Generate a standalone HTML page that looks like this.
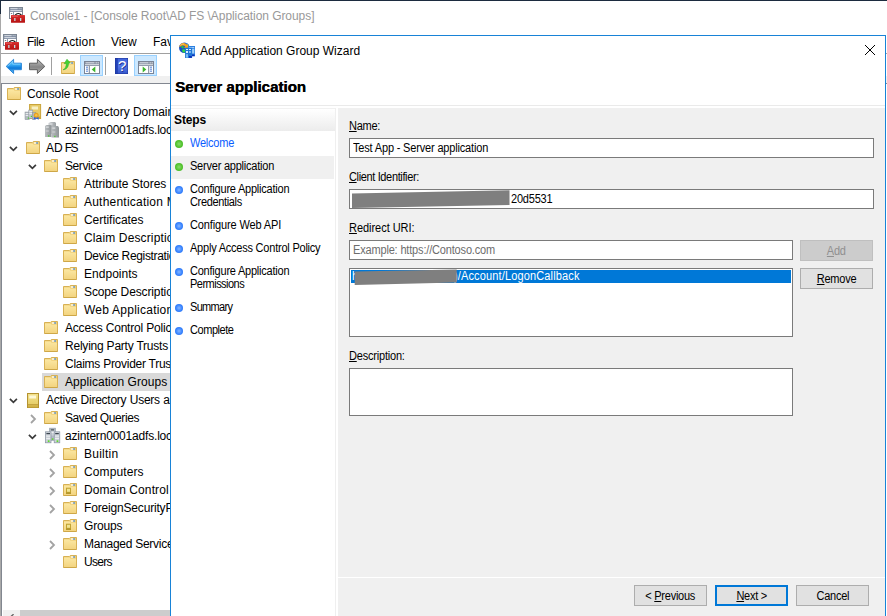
<!DOCTYPE html>
<html lang="en">
<head>
<meta charset="utf-8">
<title>Console1 - [Console Root\AD FS \Application Groups]</title>
<style>
*{box-sizing:border-box;margin:0;padding:0}
html,body{width:887px;height:616px;overflow:hidden;background:#fff}
body{position:relative;font-family:"Liberation Sans",sans-serif;font-size:12px;color:#000}
.abs{position:absolute}
#frameTop{left:0;top:0;width:887px;height:1px;background:#1c2b3f}
#frameLeft{left:0;top:1px;width:1px;height:615px;background:#a9a9a9}
#frameLeftDark{left:0;top:0;width:1px;height:14px;background:#1c2b3f}
#title{left:30px;top:8px;color:#999;font-size:12px;letter-spacing:-0.06px;white-space:nowrap;line-height:16px}
.menu{top:34px;font-size:12px;white-space:nowrap;line-height:16px}
#menuSep{left:1px;top:53px;width:886px;height:1px;background:#a0a0a0}
#band{left:1px;top:76px;width:886px;height:7px;background:#f0f0f0}
#treeBorderT{left:1px;top:83px;width:886px;height:1px;background:#828790}
#treeBorderL{left:1px;top:83px;width:1px;height:533px;background:#828790}
#tree{left:2px;top:84px;width:168px;height:526px;overflow:hidden;background:#fff}
#treeIn{position:absolute;left:-2px;top:-84px;width:400px;height:700px}
.tt{position:absolute;font-size:12px;line-height:18px;white-space:nowrap;color:#000}
.ic,.ch{position:absolute;display:block;overflow:visible}
.sel{position:absolute;width:140px;height:18px;background:#d9d9d9}
.tsep{top:57px;width:1px;height:18px;background:#a0a0a0}
.tbtn{top:55px;width:23px;height:21px;background:#cce8ff;border:1px solid #99d1ff}
#hsb{left:3px;top:610px;width:167px;height:6px;background:#f0f0f0}
#hsbThumb{left:20px;top:610px;width:150px;height:6px;background:#cdcdcd}
/* dialog */
#dlg{left:170px;top:35px;width:716px;height:600px;background:#fff;border:1px solid #1883d7}
#dtitle{left:200px;top:43px;font-size:12px;line-height:16px;white-space:nowrap}
#dhead{left:175px;top:78px;font-size:14px;font-weight:bold;line-height:18px;white-space:nowrap;transform-origin:0 0;transform:scaleX(1.079);text-shadow:0.35px 0 0 #000}
#dsep{left:171px;top:105px;width:714px;height:1px;background:#eaeaea}
#stepsHdr{left:171px;top:108px;width:164px;height:23px;background:linear-gradient(#ffffff,#ececec);border-top:1px solid #f1f1f1}
#stepsT{left:174px;top:113px;font-size:12px;font-weight:bold;letter-spacing:-0.1px;line-height:15px}
#stepSel{left:171px;top:156px;width:163px;height:23px;background:#f0f0f0}
.st{position:absolute;left:190px;font-size:12px;line-height:13px;white-space:nowrap;letter-spacing:-0.24px;transform:scaleX(.9167);transform-origin:0 0}
.dot{position:absolute;left:175px;width:8px;height:8px;border-radius:50%}
.dot.g{background:radial-gradient(circle at 50% 50%,#8adb6e 0%,#58c634 50%,#33ad10 100%)}
.dot.b{background:radial-gradient(circle at 50% 50%,#86b6ff 0%,#3f88ff 50%,#1263ee 100%)}
#pane{left:338px;top:108px;width:547px;height:508px;background:#f0f0f0}
.lb{position:absolute;left:349px;font-size:12px;line-height:13px;white-space:nowrap;transform:scaleX(.9167);transform-origin:0 0}
.sx{display:inline-block;font-size:12px;transform:scaleX(.9167);transform-origin:0 50%}
.sc{display:inline-block;font-size:12px;letter-spacing:-0.27px;transform:scaleX(.9167);transform-origin:50% 50%}
.lb u,.btn u{text-decoration:underline}
.inp{position:absolute;background:#fff;border:1px solid #7a7a7a;font-size:11px;line-height:18px;padding-left:3px;white-space:nowrap;overflow:hidden}
.btn{position:absolute;height:21px;width:73px;background:#e1e1e1;border:1px solid #adadad;font-size:11px;line-height:19px;padding-top:1px;text-align:center;letter-spacing:-0.25px}
.btn.dis{background:#cccccc;border-color:#bfbfbf;color:#909090}
.btn.def{border:2px solid #0078d7;line-height:17px}
.red{position:absolute;background:#7f7f7f}
#psep{left:338px;top:577px;width:547px;height:1px;background:#fff}
</style>
</head>
<body>
<svg width="0" height="0" style="position:absolute">
<defs>
<linearGradient id="gF" x1="0" y1="0" x2="0" y2="1"><stop offset="0" stop-color="#fbe7a2"/><stop offset="1" stop-color="#f3d480"/></linearGradient>
<symbol id="i-folder" viewBox="0 0 16 16">
<path d="M0.5 3.5 H6.3 L7.3 2.5 H13.5 V14.5 H0.5Z" fill="#efcf78" stroke="#d8b154" stroke-width="1"/>
<path d="M1 4.6 H6.4 L7.6 5.8 H13 V14 H1Z" fill="url(#gF)"/>
<rect x="8" y="3.4" width="2.2" height="1.2" fill="#fff"/><rect x="10.2" y="3.4" width="1.8" height="1.2" fill="#3f8ae8"/>
<rect x="0.5" y="14" width="13" height="0.6" fill="#c9a040"/>
</symbol>
<symbol id="i-ou" viewBox="0 0 16 16">
<use href="#i-folder"/>
<rect x="3" y="6.700" width="5" height="6" fill="#c2a433"/>
<rect x="4" y="7.800" width="3" height="3" fill="#f0e391"/>
<rect x="3" y="11.700" width="5" height="1" fill="#a88a22"/>
</symbol>
<symbol id="i-srv" viewBox="0 0 16 16" overflow="visible">
<linearGradient id="gS" x1="0" y1="0" x2="1" y2="0"><stop offset="0" stop-color="#b9bdc0"/><stop offset="0.500" stop-color="#a3a8ab"/><stop offset="1" stop-color="#8f9497"/></linearGradient>
<linearGradient id="gS2" x1="0" y1="0" x2="1" y2="0"><stop offset="0" stop-color="#c9cccf"/><stop offset="1" stop-color="#9da2a5"/></linearGradient>
<path d="M3.500 2 L6 1 H10 L11 2 V13 H3.500Z" fill="url(#gS2)"/>
<rect x="4.500" y="2.500" width="3" height="1" fill="#e6e8ea"/>
<path d="M0 5 L1.500 4 H5.500 L6.500 5 V16 H0Z" fill="url(#gS)"/>
<rect x="0.800" y="5.600" width="3" height="1" fill="#e6e8ea"/><rect x="0.800" y="9.500" width="3" height="1" fill="#d3d6d8"/>
<path d="M6.500 6 L8 5 H13 L14 6.500 V16.500 H6.500Z" fill="url(#gS)"/>
<rect x="7.300" y="6.600" width="3" height="1" fill="#e6e8ea"/><rect x="7.300" y="10.500" width="3" height="1" fill="#d3d6d8"/>
<rect x="3" y="14.300" width="1.300" height="1.300" fill="#4ad02c"/><rect x="9.200" y="14.800" width="1.300" height="1.300" fill="#4ad02c"/>
</symbol>
<symbol id="i-dom" viewBox="0 0 16 16" overflow="visible">
<rect x="4.700" y="1.200" width="5.600" height="8" fill="#ccd2d8" stroke="#8893a0" stroke-width="0.700"/>
<rect x="5.700" y="2.300" width="3.600" height="1.200" fill="#3d4650"/>
<rect x="5.500" y="5" width="4" height="0.800" fill="#f4f6f8"/>
<rect x="6" y="9" width="3" height="5" fill="#b4bcc4"/>
<rect x="6.800" y="11.300" width="1.600" height="1.600" fill="#5fdc2a"/>
<rect x="0.400" y="4.800" width="5.600" height="11" fill="#ccd2d8" stroke="#8893a0" stroke-width="0.700"/>
<rect x="1.400" y="6" width="3.600" height="1.200" fill="#3d4650"/>
<rect x="1.200" y="8.700" width="4" height="0.800" fill="#f4f6f8"/><rect x="1.200" y="11" width="4" height="0.800" fill="#f4f6f8"/>
<rect x="2.800" y="13.300" width="1.700" height="1.700" fill="#5fdc2a"/>
<rect x="9.200" y="4.800" width="5.600" height="11" fill="#ccd2d8" stroke="#8893a0" stroke-width="0.700"/>
<rect x="10.200" y="6" width="3.600" height="1.200" fill="#3d4650"/>
<rect x="10" y="8.700" width="4" height="0.800" fill="#f4f6f8"/><rect x="10" y="11" width="4" height="0.800" fill="#f4f6f8"/>
<rect x="11.600" y="13.300" width="1.700" height="1.700" fill="#5fdc2a"/>
</symbol>
<symbol id="i-aduc" viewBox="0 0 16 16" overflow="visible">
<linearGradient id="gA" x1="0" y1="0" x2="0" y2="1"><stop offset="0" stop-color="#f3e28f"/><stop offset="1" stop-color="#e3c95e"/></linearGradient>
<rect x="1.500" y="2.500" width="11" height="14" fill="url(#gA)" stroke="#b59330" stroke-width="1"/>
<rect x="3.300" y="4.500" width="6.700" height="3" fill="#fdf8d6"/>
<rect x="1.500" y="13.300" width="11" height="1" fill="#b59330"/>
<rect x="2" y="14.300" width="10" height="2" fill="#d2b245"/>
</symbol>
<symbol id="i-addt" viewBox="0 0 16 16" overflow="visible">
<rect x="3.600" y="1.500" width="11" height="14" fill="#e6ca68" stroke="#c9a43a" stroke-width="1"/>
<rect x="5.700" y="3.500" width="6.300" height="3" fill="#f7efc4"/>
<rect x="3.600" y="13.500" width="11" height="1.500" fill="#c9a43a"/>
<rect x="-1" y="9" width="4.500" height="7.700" fill="#b3bac0" stroke="#8a929a" stroke-width="0.500"/>
<rect x="-0.300" y="10" width="3" height="0.900" fill="#eef0f2"/><rect x="-0.300" y="12" width="3" height="0.900" fill="#eef0f2"/>
<rect x="2.800" y="7" width="4" height="8.500" fill="#c3c9ce" stroke="#8a929a" stroke-width="0.500"/>
<rect x="3.400" y="8" width="2.800" height="0.900" fill="#eef0f2"/><rect x="3.400" y="10" width="2.800" height="0.900" fill="#eef0f2"/>
<rect x="6.300" y="9.500" width="3.500" height="7" fill="#b3bac0" stroke="#8a929a" stroke-width="0.500"/>
<rect x="1.800" y="14.500" width="1.200" height="1.200" fill="#4ad02c"/><rect x="4.800" y="12.800" width="1.200" height="1.200" fill="#4ad02c"/>
<path d="M8 14 L7.600 16.800 L10.200 15.500 L12.800 16.800 L12.400 14Z" fill="#2a62e0"/>
<circle cx="10.200" cy="12.300" r="2.500" fill="#e9a21e"/>
<circle cx="10.200" cy="12.300" r="1.200" fill="#f3c14d"/>
</symbol>
<symbol id="i-mmc" viewBox="0 0 17 17">
<linearGradient id="gT" x1="0" y1="0" x2="0" y2="1"><stop offset="0" stop-color="#d93434"/><stop offset="0.250" stop-color="#cf2626"/><stop offset="1" stop-color="#b51212"/></linearGradient>
<rect x="0.500" y="0.500" width="13" height="11" fill="#fff" stroke="#7d8794" stroke-width="1"/>
<rect x="1" y="1" width="12" height="4" fill="#77859b"/>
<rect x="1.300" y="1.300" width="7.400" height="0.900" fill="#f4f6f9"/>
<rect x="9.600" y="1.300" width="1" height="0.900" fill="#f4f6f9"/><rect x="11.500" y="1.300" width="1" height="0.900" fill="#f4f6f9"/>
<rect x="1.300" y="3.300" width="11.400" height="0.900" fill="#f4f6f9"/>
<rect x="4.200" y="5" width="0.800" height="6" fill="#77859b"/>
<rect x="1.800" y="6.100" width="1.400" height="0.800" fill="#556070"/>
<path d="M5.700 8.600 Q9.300 4.400 12.900 8.600" stroke="#151515" stroke-width="1.200" fill="none"/>
<rect x="2" y="8" width="14" height="7.800" rx="0.500" fill="url(#gT)"/>
<rect x="3" y="8.800" width="6" height="0.700" fill="#ec8080" opacity="0.800"/>
<rect x="5.200" y="11" width="1.300" height="3" fill="#c4d9df"/><rect x="11" y="11" width="1.300" height="3" fill="#c4d9df"/>
</symbol>
</defs>
</svg>

<div id="frameTop" class="abs"></div>
<div id="frameLeft" class="abs"></div>
<div id="frameLeftDark" class="abs"></div>

<svg class="abs" style="left:9px;top:7px" width="17" height="17"><use href="#i-mmc"/></svg>
<div id="title" class="abs">Console1 - [Console Root\AD FS \Application Groups]</div>

<svg class="abs" style="left:3px;top:34px" width="17" height="17"><use href="#i-mmc"/></svg>
<div class="abs menu" style="left:27px;letter-spacing:-0.46px">File</div>
<div class="abs menu" style="left:61px;letter-spacing:0.14px">Action</div>
<div class="abs menu" style="left:111px;letter-spacing:-0.07px">View</div>
<div class="abs menu" style="left:153px">Favorites</div>
<div id="menuSep" class="abs"></div>

<!-- toolbar -->
<svg class="abs" style="left:5px;top:58px" width="18" height="17" viewBox="0 0 18 17">
<defs><linearGradient id="gB" x1="0" y1="0" x2="0" y2="1"><stop offset="0" stop-color="#74d2ff"/><stop offset="0.400" stop-color="#35a8f4"/><stop offset="0.620" stop-color="#0c78d8"/><stop offset="1" stop-color="#6cc6fa"/></linearGradient></defs>
<path d="M1.200 8.400 L8.600 1.300 V5.200 H16.400 V11.700 H8.600 V15.500Z" fill="url(#gB)" stroke="#2a86d8" stroke-width="1" stroke-linejoin="round"/><path d="M2.700 8.400 L7.700 3.600 V6.200 H15.400" fill="none" stroke="#8ad6ff" stroke-width="0.800" opacity="0.900"/></svg>
<svg class="abs" style="left:28px;top:58px" width="18" height="17" viewBox="0 0 18 17">
<defs><linearGradient id="gG" x1="0" y1="0" x2="0" y2="1"><stop offset="0" stop-color="#c2c2c2"/><stop offset="0.550" stop-color="#868686"/><stop offset="1" stop-color="#b6b6b6"/></linearGradient></defs>
<path d="M16.800 8.400 L9.400 1.300 V5.200 H1.500 V11.700 H9.400 V15.500Z" fill="url(#gG)" stroke="#5e5e5e" stroke-width="1" stroke-linejoin="round"/></svg>
<div class="abs tsep" style="left:51px"></div>
<svg class="abs" style="left:61px;top:58px" width="16" height="17" viewBox="0 0 16 17">
<g transform="translate(0,1)"><use href="#i-folder" width="16" height="16"/></g>
<path d="M2 11.800 C4.200 10.800 5.300 8.500 5.200 5.400 L3.100 5.700 L6 1.200 L9.400 5 L7.500 5.200 C7.700 9 5.500 11.500 2 11.800Z" fill="#45d133" stroke="#2fae22" stroke-width="0.500"/>
</svg>
<div class="abs tbtn" style="left:80px"></div>
<svg class="abs" style="left:84px;top:61px" width="16" height="13" viewBox="0 0 16 13">
<rect x="0.500" y="0.500" width="15" height="12" fill="#fff" stroke="#7b8496"/>
<rect x="1" y="1" width="14" height="4" fill="#7e899c"/>
<rect x="1.500" y="1.400" width="9" height="0.900" fill="#f2f4f7"/>
<rect x="11.600" y="1.300" width="1.100" height="1.100" fill="#fff"/><rect x="13.600" y="1.300" width="1.100" height="1.100" fill="#fff"/>
<rect x="1" y="3.300" width="14" height="0.900" fill="#f2f4f7"/>
<rect x="4.800" y="5" width="1" height="7.500" fill="#7b8496"/>
<rect x="2" y="5.700" width="2" height="0.900" fill="#3b6fd0"/><rect x="2" y="7.700" width="2" height="0.900" fill="#3b6fd0"/><rect x="2" y="9.700" width="2" height="0.900" fill="#3b6fd0"/>
<path d="M11.300 5.500 V11.500 L7.700 8.500Z" fill="#3cb52c"/>
</svg>
<div class="abs tsep" style="left:105px"></div>
<svg class="abs" style="left:115px;top:58px" width="13" height="16" viewBox="0 0 13 16">
<defs><linearGradient id="gH" x1="0" y1="0" x2="0" y2="1"><stop offset="0" stop-color="#3f63da"/><stop offset="0.500" stop-color="#5578e6"/><stop offset="1" stop-color="#3557cc"/></linearGradient></defs>
<rect x="0" y="0" width="13" height="16" fill="#1d3296"/>
<rect x="0.500" y="0.500" width="2.300" height="15" fill="#2343b8"/>
<rect x="2.800" y="0.500" width="9.700" height="15" fill="url(#gH)"/>
<text x="7.800" y="13.600" font-family="Liberation Sans, sans-serif" font-size="15" fill="#1d3296" text-anchor="middle">?</text>
<text x="7.200" y="13" font-family="Liberation Sans, sans-serif" font-size="15" fill="#fff" text-anchor="middle">?</text>
</svg>
<div class="abs tbtn" style="left:134px"></div>
<svg class="abs" style="left:138px;top:61px" width="16" height="13" viewBox="0 0 16 13">
<rect x="0.500" y="0.500" width="15" height="12" fill="#fff" stroke="#7b8496"/>
<rect x="1" y="1" width="14" height="4" fill="#7e899c"/>
<rect x="1.500" y="1.400" width="9" height="0.900" fill="#f2f4f7"/>
<rect x="11.600" y="1.300" width="1.100" height="1.100" fill="#fff"/><rect x="13.600" y="1.300" width="1.100" height="1.100" fill="#fff"/>
<rect x="1" y="3.300" width="14" height="0.900" fill="#f2f4f7"/>
<rect x="10.200" y="5" width="1" height="7.500" fill="#7b8496"/>
<rect x="12" y="5.700" width="2" height="0.900" fill="#3b6fd0"/><rect x="12" y="7.700" width="2" height="0.900" fill="#3b6fd0"/><rect x="12" y="9.700" width="2" height="0.900" fill="#3b6fd0"/>
<path d="M4.700 5.500 V11.500 L8.300 8.500Z" fill="#3cb52c"/>
</svg>

<div id="band" class="abs"></div>
<div id="treeBorderT" class="abs"></div>
<div id="treeBorderL" class="abs"></div>
<div id="tree" class="abs"><div id="treeIn">
<svg class="ic" style="left:7px;top:85px" width="16" height="16"><use href="#i-folder"/></svg>
<span class="tt" style="left:27px;top:85px;letter-spacing:-0.111px;word-spacing:0px">Console Root</span>
<svg class="ch" style="left:9px;top:110px" width="10" height="8" viewBox="0 0 10 8"><path d="M0.9 0.9 L4.4 4.4 L7.9 0.9" fill="none" stroke="#3a3a3a" stroke-width="1.7"/></svg>
<svg class="ic" style="left:26px;top:103px" width="16" height="16"><use href="#i-addt"/></svg>
<span class="tt" style="left:46px;top:103px;letter-spacing:-0.026px;word-spacing:0px">Active Directory Domains and Trusts</span>
<svg class="ic" style="left:45px;top:121px" width="16" height="16"><use href="#i-srv"/></svg>
<span class="tt" style="left:65px;top:121px;letter-spacing:-0.192px;word-spacing:0px">azintern0001adfs.local</span>
<svg class="ch" style="left:9px;top:146px" width="10" height="8" viewBox="0 0 10 8"><path d="M0.9 0.9 L4.4 4.4 L7.9 0.9" fill="none" stroke="#3a3a3a" stroke-width="1.7"/></svg>
<svg class="ic" style="left:26px;top:139px" width="16" height="16"><use href="#i-folder"/></svg>
<span class="tt" style="left:46px;top:139px;letter-spacing:-0.114px;word-spacing:-0.9px">AD <span style="letter-spacing:-1.6px">FS</span></span>
<svg class="ch" style="left:28px;top:164px" width="10" height="8" viewBox="0 0 10 8"><path d="M0.9 0.9 L4.4 4.4 L7.9 0.9" fill="none" stroke="#3a3a3a" stroke-width="1.7"/></svg>
<svg class="ic" style="left:44px;top:157px" width="16" height="16"><use href="#i-folder"/></svg>
<span class="tt" style="left:65px;top:157px;letter-spacing:-0.404px;word-spacing:0px">Service</span>
<svg class="ic" style="left:63px;top:175px" width="16" height="16"><use href="#i-folder"/></svg>
<span class="tt" style="left:84px;top:175px;letter-spacing:-0.027px;word-spacing:0px">Attribute Stores</span>
<svg class="ic" style="left:63px;top:193px" width="16" height="16"><use href="#i-folder"/></svg>
<span class="tt" style="left:84px;top:193px;letter-spacing:0.219px;word-spacing:0px">Authentication Methods</span>
<svg class="ic" style="left:63px;top:211px" width="16" height="16"><use href="#i-folder"/></svg>
<span class="tt" style="left:84px;top:211px;letter-spacing:-0.048px;word-spacing:0px">Certificates</span>
<svg class="ic" style="left:63px;top:229px" width="16" height="16"><use href="#i-folder"/></svg>
<span class="tt" style="left:84px;top:229px;letter-spacing:0.137px;word-spacing:0px">Claim Descriptions</span>
<svg class="ic" style="left:63px;top:247px" width="16" height="16"><use href="#i-folder"/></svg>
<span class="tt" style="left:84px;top:247px;letter-spacing:-0.344px;word-spacing:0px">Device Registration</span>
<svg class="ic" style="left:63px;top:265px" width="16" height="16"><use href="#i-folder"/></svg>
<span class="tt" style="left:84px;top:265px;letter-spacing:0.028px;word-spacing:0px">Endpoints</span>
<svg class="ic" style="left:63px;top:283px" width="16" height="16"><use href="#i-folder"/></svg>
<span class="tt" style="left:84px;top:283px;letter-spacing:-0.125px;word-spacing:0px">Scope Descriptions</span>
<svg class="ic" style="left:63px;top:301px" width="16" height="16"><use href="#i-folder"/></svg>
<span class="tt" style="left:84px;top:301px;letter-spacing:0.241px;word-spacing:0px">Web Application Proxy</span>
<svg class="ic" style="left:44px;top:319px" width="16" height="16"><use href="#i-folder"/></svg>
<span class="tt" style="left:65px;top:319px;letter-spacing:-0.191px;word-spacing:0px">Access Control Policies</span>
<svg class="ic" style="left:44px;top:337px" width="16" height="16"><use href="#i-folder"/></svg>
<span class="tt" style="left:65px;top:337px;letter-spacing:-0.22px;word-spacing:0px">Relying Party Trusts</span>
<svg class="ic" style="left:44px;top:355px" width="16" height="16"><use href="#i-folder"/></svg>
<span class="tt" style="left:65px;top:355px;letter-spacing:-0.265px;word-spacing:0px">Claims Provider Trusts</span>
<div class="sel" style="left:42px;top:373px"></div>
<svg class="ic" style="left:44px;top:373px" width="16" height="16"><use href="#i-folder"/></svg>
<span class="tt" style="left:65px;top:373px;letter-spacing:0.048px;word-spacing:0px">Application Groups</span>
<svg class="ch" style="left:9px;top:398px" width="10" height="8" viewBox="0 0 10 8"><path d="M0.9 0.9 L4.4 4.4 L7.9 0.9" fill="none" stroke="#3a3a3a" stroke-width="1.7"/></svg>
<svg class="ic" style="left:26px;top:391px" width="16" height="16"><use href="#i-aduc"/></svg>
<span class="tt" style="left:46px;top:391px;letter-spacing:-0.257px;word-spacing:0.4px">Active Directory Users and Computers</span>
<svg class="ch" style="left:30px;top:414px" width="8" height="11" viewBox="0 0 8 11"><path d="M1.0 1.0 L5.0 5.0 L1.0 9.0" fill="none" stroke="#a3a3a3" stroke-width="1.8"/></svg>
<svg class="ic" style="left:44px;top:409px" width="16" height="16"><use href="#i-folder"/></svg>
<span class="tt" style="left:65px;top:409px;letter-spacing:-0.416px;word-spacing:0px">Saved Queries</span>
<svg class="ch" style="left:28px;top:434px" width="10" height="8" viewBox="0 0 10 8"><path d="M0.9 0.9 L4.4 4.4 L7.9 0.9" fill="none" stroke="#3a3a3a" stroke-width="1.7"/></svg>
<svg class="ic" style="left:45px;top:427px" width="16" height="16"><use href="#i-dom"/></svg>
<span class="tt" style="left:65px;top:427px;letter-spacing:-0.192px;word-spacing:0px">azintern0001adfs.local</span>
<svg class="ch" style="left:49px;top:450px" width="8" height="11" viewBox="0 0 8 11"><path d="M1.0 1.0 L5.0 5.0 L1.0 9.0" fill="none" stroke="#a3a3a3" stroke-width="1.8"/></svg>
<svg class="ic" style="left:63px;top:445px" width="16" height="16"><use href="#i-folder"/></svg>
<span class="tt" style="left:84px;top:445px;letter-spacing:0.252px;word-spacing:0px">Builtin</span>
<svg class="ch" style="left:49px;top:468px" width="8" height="11" viewBox="0 0 8 11"><path d="M1.0 1.0 L5.0 5.0 L1.0 9.0" fill="none" stroke="#a3a3a3" stroke-width="1.8"/></svg>
<svg class="ic" style="left:63px;top:463px" width="16" height="16"><use href="#i-folder"/></svg>
<span class="tt" style="left:84px;top:463px;letter-spacing:0.114px;word-spacing:0px">Computers</span>
<svg class="ch" style="left:49px;top:486px" width="8" height="11" viewBox="0 0 8 11"><path d="M1.0 1.0 L5.0 5.0 L1.0 9.0" fill="none" stroke="#a3a3a3" stroke-width="1.8"/></svg>
<svg class="ic" style="left:63px;top:481px" width="16" height="16"><use href="#i-ou"/></svg>
<span class="tt" style="left:84px;top:481px;letter-spacing:0.094px;word-spacing:0px">Domain Control<span style="margin-left:1.2px">lers</span></span>
<svg class="ch" style="left:49px;top:504px" width="8" height="11" viewBox="0 0 8 11"><path d="M1.0 1.0 L5.0 5.0 L1.0 9.0" fill="none" stroke="#a3a3a3" stroke-width="1.8"/></svg>
<svg class="ic" style="left:63px;top:499px" width="16" height="16"><use href="#i-folder"/></svg>
<span class="tt" style="left:84px;top:499px;letter-spacing:-0.174px;word-spacing:0px">ForeignSecurityPrincipals</span>
<svg class="ic" style="left:63px;top:517px" width="16" height="16"><use href="#i-ou"/></svg>
<span class="tt" style="left:84px;top:517px;letter-spacing:-0.191px;word-spacing:0px">Groups</span>
<svg class="ch" style="left:49px;top:540px" width="8" height="11" viewBox="0 0 8 11"><path d="M1.0 1.0 L5.0 5.0 L1.0 9.0" fill="none" stroke="#a3a3a3" stroke-width="1.8"/></svg>
<svg class="ic" style="left:63px;top:535px" width="16" height="16"><use href="#i-folder"/></svg>
<span class="tt" style="left:84px;top:535px;letter-spacing:-0.27px;word-spacing:0px">Managed Service Accounts</span>
<svg class="ic" style="left:63px;top:553px" width="16" height="16"><use href="#i-folder"/></svg>
<span class="tt" style="left:84px;top:553px;letter-spacing:-0.686px;word-spacing:0px">Users</span>
</div></div>
<div id="hsb" class="abs"></div>
<div id="hsbThumb" class="abs"></div>
<svg class="abs" style="left:10px;top:614px" width="6" height="3" viewBox="0 0 6 3"><path d="M0.300 3 L3.600 0.200" stroke="#606060" stroke-width="1.300" fill="none"/></svg>

<!-- dialog -->
<div id="dlg" class="abs"></div>
<svg class="abs" style="left:179px;top:42px;overflow:visible" width="16" height="16" viewBox="0 0 16 16">
<circle cx="5.300" cy="5.700" r="5.300" fill="#1a4fc4"/>
<path d="M6.500 0.800 C8.500 1.200 10 2.800 10.300 4.500 L8.500 5 L7.500 2.500Z" fill="#3a8ee8"/>
<path d="M2.300 4.300 C3.300 3.800 4.500 4.200 4.800 5.200 C5 6 4.300 6.600 3.300 6.300 C2.500 6 2 5 2.300 4.300Z" fill="#25c83c"/>
<path d="M3.500 7.500 C5 6.800 7 7.500 7 9 C7 10.500 5 11 3.800 10.300 C3 9.500 3 8.200 3.500 7.500Z" fill="#2fd447"/>
<path d="M8.600 2.600 C9.300 2.600 9.800 3.200 9.600 3.800 L8.800 3.800Z" fill="#3ad050"/>
<path d="M0.300 5.300 C0.300 2.500 2.500 0.700 5 1 C6.400 1.200 7.400 2 8.100 3 L9 1.800 L9.100 6.400 L5 6 L6.300 4.800 C5.300 3.500 3.800 3.200 2.300 3.900 C1.300 4.300 0.600 4.800 0.300 5.300Z" fill="#f5a41c"/>
<path d="M1.500 2.800 C2.500 2.200 3.800 2 5 2.300" stroke="#ffd98a" stroke-width="0.600" fill="none"/>
<rect x="9" y="4" width="7" height="10.300" fill="#2b7fe0"/>
<rect x="9.800" y="5.200" width="5.400" height="1" fill="#bfe0ff"/><rect x="12.500" y="7" width="2.800" height="4.500" fill="#9fd0f8"/>
<rect x="13" y="12.500" width="2.500" height="1.600" fill="#0b2fb8"/>
<rect x="6.100" y="5.700" width="7" height="10.300" fill="#1f76d8"/>
<rect x="7" y="7" width="2" height="1" fill="#d9ecff"/><rect x="10" y="7" width="2" height="1" fill="#d9ecff"/>
<rect x="7" y="9" width="2" height="2" fill="#d9ecff"/><rect x="10.200" y="9" width="1.500" height="2" fill="#9fd0f8"/>
<rect x="7" y="12.200" width="2" height="3.500" fill="#7fbdf2"/>
<rect x="10" y="14" width="2.800" height="1.800" fill="#0b2fb8"/>
</svg>
<div id="dtitle" class="abs">Add Application Group Wizard</div>
<svg class="abs" style="left:864px;top:44px" width="12" height="12" viewBox="0 0 12 12"><path d="M1 1 L11 11 M11 1 L1 11" stroke="#000" stroke-width="1" fill="none"/></svg>
<div id="dhead" class="abs">Server application</div>
<div id="dsep" class="abs"></div>
<div id="stepsHdr" class="abs"></div>
<div id="stepsT" class="abs">Steps</div>
<div id="stepSel" class="abs"></div>
<div class="abs" style="left:335px;top:108px;width:1px;height:508px;background:#efefef"></div>

<div class="dot g" style="top:140px"></div><div class="st" style="top:137px;color:#0a5cff">Welcome</div>
<div class="dot g" style="top:163px"></div><div class="st" style="top:160px">Server application</div>
<div class="dot b" style="top:186px"></div><div class="st" style="top:183px">Configure Application<br><span style="letter-spacing:-0.382px">Credentials</span></div>
<div class="dot b" style="top:222px"></div><div class="st" style="top:219px;letter-spacing:-0.142px">Configure Web API</div>
<div class="dot b" style="top:245px"></div><div class="st" style="top:242px">Apply Access Control Policy</div>
<div class="dot b" style="top:268px"></div><div class="st" style="top:265px">Configure Application<br><span style="letter-spacing:-0.567px">Permissions</span></div>
<div class="dot b" style="top:304px"></div><div class="st" style="top:301px;letter-spacing:-0.753px">Summary</div>
<div class="dot b" style="top:327px"></div><div class="st" style="top:324px;letter-spacing:-0.491px">Complete</div>

<div id="pane" class="abs"></div>
<div class="lb" style="top:120px;letter-spacing:-0.305px"><u>N</u>ame:</div>
<div class="inp" style="left:349px;top:138px;width:525px;height:20px;letter-spacing:-0.185px"><span class="sx">Test App - Server application</span></div>
<div class="lb" style="top:171px;letter-spacing:-0.393px"><u>C</u>lient Identifier:</div>
<div class="inp" style="left:349px;top:189px;width:525px;height:20px"><span style="padding-left:158px"></span><span class="sx" style="letter-spacing:-0.218px">20d5531</span></div>
<svg class="abs" style="left:350px;top:188px" width="164" height="22" viewBox="0 0 164 22"><path d="M2 5.500 L159.500 2.300 L159.500 17 L2 20Z" fill="#7f7f7f"/></svg>
<div class="lb" style="top:222px;letter-spacing:-0.044px"><u>R</u>edirect URI:</div>
<div class="inp" style="left:349px;top:240px;width:444px;height:20px;color:#6d6d6d;letter-spacing:-0.185px"><span class="sx">Example: https://Contoso.com</span></div>
<div class="btn dis" style="left:800px;top:240px"><span class="sc"><u>A</u>dd</span></div>
<div class="inp" style="left:349px;top:268px;width:444px;height:69px"></div>
<div class="abs" style="left:351px;top:270px;width:440px;height:13px;background:#0078d7;color:#fff;font-size:11px;line-height:13px;white-space:nowrap;overflow:hidden"><span class="sx" style="padding-left:1px">h</span><span style="padding-left:95.500px"></span><span class="sx" style="letter-spacing:0.153px">)/Account/LogonCallback</span></div>
<svg class="abs" style="left:352px;top:267px" width="108" height="20" viewBox="0 0 108 20"><path d="M2.700 4.500 L104.700 2.400 L104.700 15.600 L2.700 18Z" fill="#7f7f7f"/></svg>
<div class="btn" style="left:800px;top:268px"><span class="sc"><u>R</u>emove</span></div>
<div class="lb" style="top:350px;letter-spacing:-0.218px"><u>D</u>escription:</div>
<div class="inp" style="left:349px;top:368px;width:444px;height:48px"></div>
<div id="psep" class="abs"></div>
<div class="btn" style="left:634px;top:585px"><span class="sc">&lt; <u>P</u>revious</span></div>
<div class="btn def" style="left:715px;top:585px"><span class="sc"><u>N</u>ext &gt;</span></div>
<div class="btn" style="left:796px;top:585px"><span class="sc">Cancel</span></div>
</body>
</html>
